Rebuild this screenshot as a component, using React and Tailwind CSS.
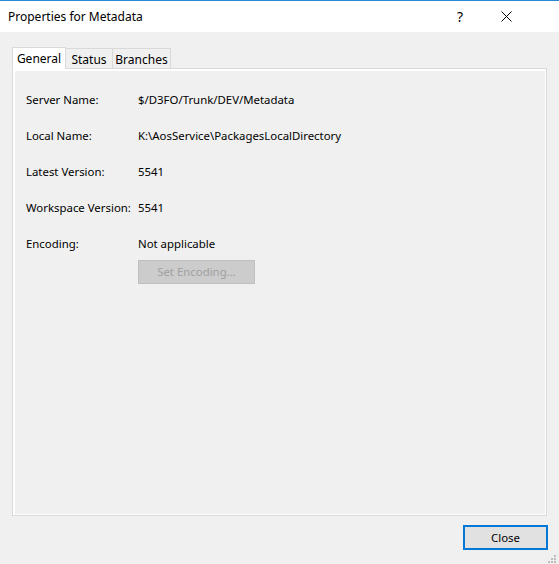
const rows = [
  ['Server Name:', '$/D3FO/Trunk/DEV/Metadata'],
  ['Local Name:', 'K:\\AosService\\PackagesLocalDirectory'],
  ['Latest Version:', '5541'],
  ['Workspace Version:', '5541'],
  ['Encoding:', 'Not applicable'],
]

export default function App() {
  return (
    <div
      className="w-[559px] h-[564px] flex flex-col bg-[#f0f0f0] text-[11.4px] text-black overflow-hidden"
      style={{ fontFamily: '"Noto Sans", "Segoe UI", sans-serif' }}
    >
      {/* title bar */}
      <div className="h-[1px] bg-[#2b87d3]" />
      <div className="h-[31px] bg-white flex items-center pl-[8px] pr-[30px] shrink-0 text-[12px]">
        <span className="flex-1">Properties for Metadata</span>
        <span className="w-[46px] text-center text-[14px]">?</span>
        <span className="w-[46px] flex justify-center">
          <svg width="11" height="11" viewBox="0 0 11 11">
            <path d="M0.5 0.5 L10.5 10.5 M10.5 0.5 L0.5 10.5" stroke="#000" strokeWidth="1" />
          </svg>
        </span>
      </div>

      {/* tabs */}
      <div className="flex flex-col px-[12px] pt-[14px]">
        <div className="flex items-end h-[22px] text-[12px]">
          <div className="h-[22px] w-[54px] flex items-center justify-center bg-white border border-b-0 border-[#d9d9d9] relative -mb-px z-10">
            General
          </div>
          <div className="h-[20px] w-[47px] flex items-center justify-center pt-[2px] bg-[#f0f0f0] border border-l-0 border-b-0 border-[#d9d9d9]">
            Status
          </div>
          <div className="h-[20px] w-[58px] flex items-center justify-center pt-[2px] bg-[#f0f0f0] border border-l-0 border-b-0 border-[#d9d9d9]">
            Branches
          </div>
        </div>
        <div className="h-[448px] border border-[#d9d9d9]">
          <div className="h-full border-2 border-white border-r border-b bg-[#f0f0f0] pl-[11px] pt-[20px]">
            {rows.map(([k, v]) => (
              <div key={k} className="flex h-[36px]">
                <span className="w-[112px]">{k}</span>
                <span>{v}</span>
              </div>
            ))}
            <div className="pl-[112px] -mt-[11px]">
              <div className="w-[117px] h-[24px] border border-[#bfbfbf] bg-[#cccccc] text-[#a0a0a0] flex items-center justify-center">
                Set Encoding...
              </div>
            </div>
          </div>
        </div>
      </div>

      {/* footer */}
      <div className="flex justify-end pr-[11px] pt-[9px]">
        <div className="w-[85px] h-[25px] border-2 border-[#0078d7] bg-[#e1e1e1] flex items-center justify-center">
          Close
        </div>
      </div>
      <div className="flex justify-end pr-[2px] pt-[4px]">
        <svg width="10" height="10" viewBox="0 0 10 10">
          <rect x="7" y="1" width="2" height="2" fill="#bcbcbc" />
          <rect x="4" y="4" width="2" height="2" fill="#bcbcbc" />
          <rect x="7" y="4" width="2" height="2" fill="#bcbcbc" />
          <rect x="1" y="7" width="2" height="2" fill="#bcbcbc" />
          <rect x="4" y="7" width="2" height="2" fill="#bcbcbc" />
          <rect x="7" y="7" width="2" height="2" fill="#bcbcbc" />
        </svg>
      </div>
    </div>
  )
}
